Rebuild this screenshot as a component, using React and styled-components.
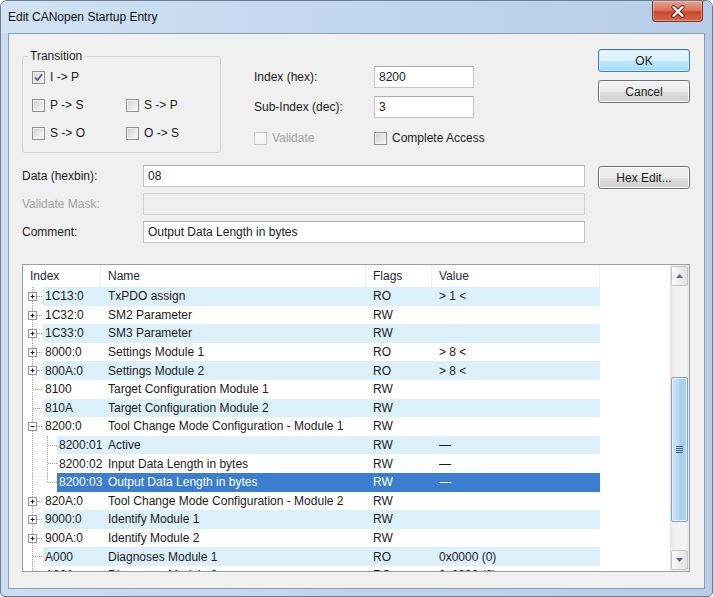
import React from "react"
import styled, { createGlobalStyle } from "styled-components"

const GlobalStyle = createGlobalStyle`
  html, body {
    margin: 0;
    padding: 0;
    background: #ffffff;
  }
  body {
    font-family: "Liberation Sans", Arial, sans-serif;
    font-size: 12px;
    color: #1b1b1b;
  }
`

const ROW_H = 18.6

const Window = styled.div`
  width: 713px;
  height: 597px;
  box-sizing: border-box;
  border: 1px solid #6d7e93;
  border-radius: 7px 7px 5px 5px;
  background: linear-gradient(to right, #cbdcf0 0%, #c2d6ee 40%, #b7cde8 100%);
  display: flex;
  flex-direction: column;
  overflow: hidden;
`

const TitleBar = styled.div`
  height: 32px;
  display: flex;
  align-items: flex-start;
  padding-left: 7px;
  background: linear-gradient(to right, #d3e3f5 0%, #c6d9f0 35%, #b6cde9 100%);
`

const Title = styled.span`
  align-self: center;
  font-size: 12px;
  color: #0e0e0e;
`

const CloseButton = styled.div`
  margin-left: auto;
  margin-right: 9px;
  width: 51px;
  height: 21px;
  box-sizing: border-box;
  border: 1px solid #7a3324;
  border-top: none;
  border-radius: 0 0 4px 4px;
  background: linear-gradient(to bottom, #e6a593 0%, #d9735b 45%, #c9472c 55%, #d5654a 100%);
  box-shadow: inset 0 0 0 1px rgba(255, 210, 190, 0.45);
  display: flex;
  align-items: center;
  justify-content: center;
`

const Client = styled.div`
  flex: 1;
  margin: 0 7px 7px 7px;
  border: 1px solid #8b9bb1;
  background: #f0f0f0;
  padding: 0 14px 0 13px;
  display: flex;
  flex-direction: column;
`

const TopSection = styled.div`
  height: 131px;
  display: flex;
  align-items: flex-start;
`

const Group = styled.fieldset`
  margin: 15px 0 0 0;
  width: 196px;
  height: 104px;
  box-sizing: border-box;
  border: 1px solid #d5d5d5;
  border-radius: 3px;
  padding: 0 0 0 5px;
`

const Legend = styled.legend`
  padding: 0 2px;
  line-height: 14px;
  font-size: 12px;
  color: #1b1b1b;
`

const CheckGrid = styled.div`
  margin: 7px 0 0 4px;
  display: grid;
  grid-template-columns: 94px 94px;
  grid-auto-rows: 14px;
  row-gap: 14px;
`

const CheckLabel = styled.label`
  display: flex;
  align-items: center;
  gap: 5px;
  height: 14px;
  white-space: nowrap;
  color: ${p => (p.disabled ? "#a2a2a2" : "#1b1b1b")};
`

const Box = styled.span`
  width: 13px;
  height: 13px;
  box-sizing: border-box;
  border: 1px solid ${p => (p.disabled ? "#c8c8c8" : "#8e8f8f")};
  background: ${p =>
    p.disabled
      ? "#f6f6f6"
      : "linear-gradient(135deg, #cdcdcd 0%, #e6e6e6 50%, #f8f8f8 100%)"};
  box-shadow: inset 0 0 0 1px ${p => (p.disabled ? "#f4f4f4" : "#f2f2f2")};
  display: flex;
  align-items: center;
  justify-content: center;
  flex-shrink: 0;
`

const Fields = styled.div`
  margin: 32px 0 0 33px;
  display: grid;
  grid-template-columns: 120px 100px;
  grid-auto-rows: 22px;
  row-gap: 8px;
  align-items: center;
`

const CheckRow = styled.div`
  grid-column: 1 / span 2;
  display: grid;
  grid-template-columns: 120px 130px;
  margin-top: 5px;
  align-self: start;
`

const Buttons = styled.div`
  margin: 15px 0 0 auto;
  width: 92px;
  display: flex;
  flex-direction: column;
  gap: 8px;
`

const Button = styled.button`
  height: 23px;
  width: 92px;
  box-sizing: border-box;
  padding: 0;
  font-family: inherit;
  font-size: 12px;
  color: #1b1b1b;
  border: 1px solid ${p => (p.primary ? "#3c7fb1" : "#707070")};
  border-radius: 3px;
  background: ${p =>
    p.primary
      ? "linear-gradient(to bottom, #eaf6fd 0%, #d9f0fc 50%, #bee6fd 51%, #a7d9f5 100%)"
      : "linear-gradient(to bottom, #f2f2f2 0%, #ebebeb 50%, #dddddd 51%, #cfcfcf 100%)"};
  box-shadow: inset 0 0 0 1px ${p => (p.primary ? "#c8ecfc" : "#fbfbfb")};
  margin-top: ${p => p.offset || 0}px;
`

const Label = styled.span`
  white-space: nowrap;
  color: ${p => (p.disabled ? "#a2a2a2" : "#1b1b1b")};
`

const Input = styled.div`
  height: 22px;
  box-sizing: border-box;
  border: 1px solid #c3c6cc;
  border-top-color: #abadb3;
  background: ${p => (p.disabled ? "#efefef" : "#ffffff")};
  ${p => p.disabled && "border-color: #d3d3d3;"}
  padding: 0 4px;
  display: flex;
  align-items: center;
  white-space: nowrap;
  color: #1b1b1b;
`

const DataSection = styled.div`
  display: grid;
  grid-template-columns: 121px 442px 1fr;
  grid-auto-rows: 22px;
  row-gap: 6px;
  align-items: center;
`

const SideButton = styled.div`
  justify-self: end;
  align-self: start;
`

const List = styled.div`
  margin-top: 21px;
  height: 308px;
  box-sizing: border-box;
  border: 1px solid #9a9ea6;
  background: #ffffff;
  display: flex;
  overflow: hidden;
`

const Table = styled.div`
  flex: 1;
  overflow: hidden;
`

const Header = styled.div`
  height: 22px;
  display: flex;
  width: 577px;
`

const HeadCell = styled.div`
  width: ${p => p.w}px;
  box-sizing: border-box;
  padding-left: 7px;
  display: flex;
  align-items: center;
  color: #1e2a3a;
  border-right: 1px solid #f0f0f0;
`

const Row = styled.div`
  height: ${ROW_H}px;
  display: flex;
`

const Cells = styled.div`
  display: flex;
  align-items: center;
  height: 100%;
  background: ${p => (p.selected ? "#3b7ed0" : p.striped ? "#dcf0fa" : "transparent")};
  color: ${p => (p.selected ? "#ffffff" : "#1b1b1b")};
`

const Cell = styled.div`
  width: ${p => p.w}px;
  box-sizing: border-box;
  padding-left: ${p => (p.pad != null ? p.pad : 7)}px;
  white-space: nowrap;
  flex-shrink: 0;
`

const ScrollBar = styled.div`
  width: 19px;
  display: flex;
  flex-direction: column;
  background: linear-gradient(to right, #e2e2e2 0%, #f0f0f0 15%, #f3f3f3 85%, #e4e4e4 100%);
`

const ArrowButton = styled.div`
  height: 20px;
  margin: 1px 1px 0 1px;
  box-sizing: border-box;
  border: 1px solid #c6c6c6;
  border-radius: 2px;
  background: linear-gradient(to right, #fbfbfb 0%, #ededed 50%, #e2e2e2 100%);
  display: flex;
  align-items: center;
  justify-content: center;
  ${p => p.down && "margin: auto 1px 1px 1px;"}
`

const Thumb = styled.div`
  height: ${p => p.h}px;
  margin: ${p => p.top}px 1px 0 1px;
  box-sizing: border-box;
  border: 1px solid #7fa4cf;
  border-radius: 2px;
  background: linear-gradient(to right, #d2e5f8 0%, #bcd7f3 45%, #a8cbef 55%, #b2d1f1 100%);
  box-shadow: inset 0 0 0 1px #e4f0fc;
  display: flex;
  align-items: center;
  justify-content: center;
`

const Check = () => (
  <svg width="9" height="9" viewBox="0 0 9 9">
    <path d="M1 4.5 L3.5 7.2 L8 1.2" fill="none" stroke="#4a5c8f" strokeWidth="1.8" />
  </svg>
)

const CheckBox = ({ label, checked, disabled }) => (
  <CheckLabel disabled={disabled}>
    <Box disabled={disabled}>{checked && <Check />}</Box>
    {label}
  </CheckLabel>
)

const TreeLines = ({ level, exp, last }) => {
  const w = level ? 34 : 20
  const c = 9.5
  const h = ROW_H
  const dot = { stroke: "#a3a3a3", strokeWidth: 1, strokeDasharray: "1 1" }
  return (
    <svg width={w} height={h} style={{ flexShrink: 0, display: "block" }}>
      <line x1="9.5" y1="0" x2="9.5" y2={h} {...dot} />
      {level === 0 && !exp && <line x1="10" y1={c} x2={w} y2={c} {...dot} />}
      {level === 0 && exp && (
        <g>
          <line x1="14" y1={c} x2={w} y2={c} {...dot} />
          <rect x="5.5" y={c - 4} width="8" height="8" fill="#f7f7f7" stroke="#989898" />
          <line x1="7.5" y1={c} x2="11.5" y2={c} stroke="#222" />
          {exp === "plus" && <line x1="9.5" y1={c - 2} x2="9.5" y2={c + 2} stroke="#222" />}
        </g>
      )}
      {level === 1 && (
        <g>
          <line x1="24.5" y1="0" x2="24.5" y2={last ? c : h} {...dot} />
          <line x1="25" y1={c} x2={w} y2={c} {...dot} />
        </g>
      )}
    </svg>
  )
}

const rows = [
  { idx: "1C13:0", name: "TxPDO assign", flags: "RO", value: "> 1 <", exp: "plus" },
  { idx: "1C32:0", name: "SM2 Parameter", flags: "RW", exp: "plus" },
  { idx: "1C33:0", name: "SM3 Parameter", flags: "RW", exp: "plus" },
  { idx: "8000:0", name: "Settings Module 1", flags: "RO", value: "> 8 <", exp: "plus" },
  { idx: "800A:0", name: "Settings Module 2", flags: "RO", value: "> 8 <", exp: "plus" },
  { idx: "8100", name: "Target Configuration Module 1", flags: "RW" },
  { idx: "810A", name: "Target Configuration Module 2", flags: "RW" },
  { idx: "8200:0", name: "Tool Change Mode Configuration - Module 1", flags: "RW", exp: "minus" },
  { idx: "8200:01", name: "Active", flags: "RW", value: "—", level: 1 },
  { idx: "8200:02", name: "Input Data Length in bytes", flags: "RW", value: "—", level: 1 },
  { idx: "8200:03", name: "Output Data Length in bytes", flags: "RW", value: "—", level: 1, last: true, selected: true },
  { idx: "820A:0", name: "Tool Change Mode Configuration - Module 2", flags: "RW", exp: "plus" },
  { idx: "9000:0", name: "Identify Module 1", flags: "RW", exp: "plus" },
  { idx: "900A:0", name: "Identify Module 2", flags: "RW", exp: "plus" },
  { idx: "A000", name: "Diagnoses Module 1", flags: "RO", value: "0x0000 (0)" },
  { idx: "A00A", name: "Diagnoses Module 2", flags: "RO", value: "0x0000 (0)" },
]

const App = () => {
  return (
    <>
      <GlobalStyle />
      <Window>
        <TitleBar>
          <Title>Edit CANopen Startup Entry</Title>
          <CloseButton>
            <svg width="16" height="13" viewBox="0 0 16 13">
              <path d="M3.5 2 L12.5 11 M12.5 2 L3.5 11" stroke="#6b2417" strokeWidth="4.2" strokeLinecap="round" />
              <path d="M3.5 2 L12.5 11 M12.5 2 L3.5 11" stroke="#ffffff" strokeWidth="2.4" strokeLinecap="round" />
            </svg>
          </CloseButton>
        </TitleBar>
        <Client>
          <TopSection>
            <Group>
              <Legend>Transition</Legend>
              <CheckGrid>
                <CheckBox label="I -> P" checked />
                <span />
                <CheckBox label="P -> S" />
                <CheckBox label="S -> P" />
                <CheckBox label="S -> O" />
                <CheckBox label="O -> S" />
              </CheckGrid>
            </Group>
            <Fields>
              <Label>Index (hex):</Label>
              <Input>8200</Input>
              <Label>Sub-Index (dec):</Label>
              <Input>3</Input>
              <CheckRow>
                <CheckBox label="Validate" disabled />
                <CheckBox label="Complete Access" />
              </CheckRow>
            </Fields>
            <Buttons>
              <Button primary>OK</Button>
              <Button>Cancel</Button>
            </Buttons>
          </TopSection>
          <DataSection>
            <Label>Data (hexbin):</Label>
            <Input>08</Input>
            <SideButton>
              <Button offset={1}>Hex Edit...</Button>
            </SideButton>
            <Label disabled>Validate Mask:</Label>
            <Input disabled />
            <span />
            <Label>Comment:</Label>
            <Input>Output Data Length in bytes</Input>
            <span />
          </DataSection>
          <List>
            <Table>
              <Header>
                <HeadCell w={78}>Index</HeadCell>
                <HeadCell w={265}>Name</HeadCell>
                <HeadCell w={66}>Flags</HeadCell>
                <HeadCell w={168}>Value</HeadCell>
              </Header>
              {rows.map((r, i) => {
                const level = r.level || 0
                const gutter = level ? 34 : 20
                return (
                  <Row key={r.idx}>
                    <TreeLines level={level} exp={r.exp} last={r.last} />
                    <Cells striped={i % 2 === 0} selected={r.selected}>
                      <Cell w={78 - gutter} pad={2}>{r.idx}</Cell>
                      <Cell w={265}>{r.name}</Cell>
                      <Cell w={66}>{r.flags}</Cell>
                      <Cell w={168}>{r.value || ""}</Cell>
                    </Cells>
                  </Row>
                )
              })}
            </Table>
            <ScrollBar>
              <ArrowButton>
                <svg width="7" height="4" viewBox="0 0 7 4">
                  <path d="M0 4 L3.5 0 L7 4 Z" fill="#5a6b85" />
                </svg>
              </ArrowButton>
              <Thumb top={91} h={145}>
                <svg width="7" height="8" viewBox="0 0 7 8">
                  <path d="M0 0.5 H7 M0 2.5 H7 M0 4.5 H7 M0 6.5 H7" stroke="#3d5f8c" strokeWidth="1" />
                </svg>
              </Thumb>
              <ArrowButton down>
                <svg width="7" height="4" viewBox="0 0 7 4">
                  <path d="M0 0 L3.5 4 L7 0 Z" fill="#5a6b85" />
                </svg>
              </ArrowButton>
            </ScrollBar>
          </List>
        </Client>
      </Window>
    </>
  )
}

export default App
